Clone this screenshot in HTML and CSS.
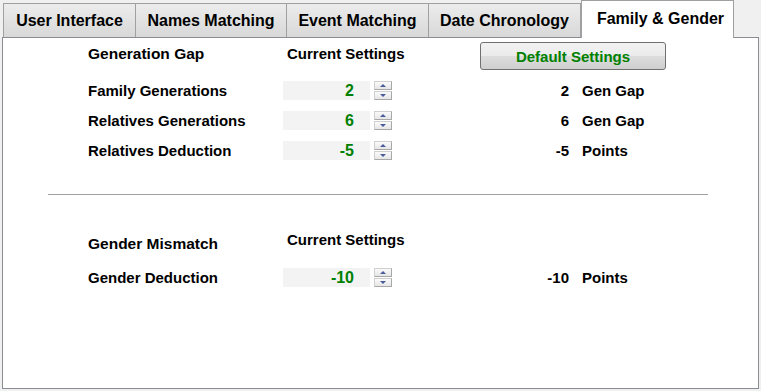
FILE: index.html
```html
<!DOCTYPE html>
<html lang="en">
<head>
    <meta charset="UTF-8">
    <title>Family &amp; Gender</title>
    <link rel="stylesheet" href="styles.css">
</head>
<body>
    <div class="tabs">
        <div class="tab">User Interface</div>
        <div class="tab">Names Matching</div>
        <div class="tab">Event Matching</div>
        <div class="tab">Date Chronology</div>
        <div class="tab active">Family &amp; Gender</div>
    </div>

    <div class="panel">
        <div class="section">
            <div class="head">
                <div class="title">Generation Gap</div>
                <div class="current">Current Settings</div>
                <button class="defaults">Default Settings</button>
            </div>
            <div class="row">
                <div class="label">Family Generations</div>
                <div class="input">2</div>
                <div class="spin"><span class="up"></span><span class="down"></span></div>
                <div class="num">2</div>
                <div class="unit">Gen Gap</div>
            </div>
            <div class="row">
                <div class="label">Relatives Generations</div>
                <div class="input">6</div>
                <div class="spin"><span class="up"></span><span class="down"></span></div>
                <div class="num">6</div>
                <div class="unit">Gen Gap</div>
            </div>
            <div class="row">
                <div class="label">Relatives Deduction</div>
                <div class="input">-5</div>
                <div class="spin"><span class="up"></span><span class="down"></span></div>
                <div class="num">-5</div>
                <div class="unit">Points</div>
            </div>
        </div>

        <hr class="sep">

        <div class="section second">
            <div class="head">
                <div class="title">Gender Mismatch</div>
                <div class="current">Current Settings</div>
            </div>
            <div class="row">
                <div class="label">Gender Deduction</div>
                <div class="input">-10</div>
                <div class="spin"><span class="up"></span><span class="down"></span></div>
                <div class="num">-10</div>
                <div class="unit">Points</div>
            </div>
        </div>
    </div>
</body>
</html>
```

FILE: styles.css
```css
body {
    margin: 0;
    width: 761px;
    height: 391px;
    background: #f0f0f0;
    font-family: "Liberation Sans", Arial, sans-serif;
    font-weight: bold;
    color: #000;
    overflow: hidden;
}
.tabs {
    display: flex;
    align-items: flex-end;
    height: 37px;
    padding-left: 3px;
    position: relative;
    z-index: 1;
}
.tab {
    height: 34px;
    line-height: 33px;
    font-size: 16px;
    text-align: center;
    white-space: nowrap;
    border: 1px solid #a0a0a0;
    border-bottom: none;
    border-right: none;
    background: linear-gradient(#ececec, #d8d8d8);
    box-sizing: border-box;
}
.tab:nth-child(1) { width: 132px; }
.tab:nth-child(2) { width: 151px; }
.tab:nth-child(3) { width: 142px; }
.tab:nth-child(4) { width: 153px; border-right: 1px solid #a0a0a0; }
.tab.active {
    width: 153px;
    height: 38px;
    line-height: 35px;
    margin-bottom: -1px;
    padding-left: 6px;
    background: #fff;
    border: 1px solid #a0a0a0;
    border-bottom: none;
}
.panel {
    margin-left: 2px;
    width: 757px;
    height: 352px;
    box-sizing: border-box;
    background: #fff;
    border: 1px solid #8a8c93;
}
.section {
    padding-left: 85px;
}
.head {
    display: flex;
    align-items: flex-start;
    height: 28px;
    padding-top: 4px;
    font-size: 15px;
    white-space: nowrap;
}
.title {
    width: 199px;
    padding-top: 3px;
    font-size: 15.5px;
}
.current {
    width: 193px;
    padding-top: 3px;
}
.defaults {
    width: 186px;
    height: 28px;
    font-family: inherit;
    font-weight: bold;
    font-size: 15px;
    color: #008000;
    background: linear-gradient(#f2f2f2 0%, #ebebeb 50%, #dddddd 51%, #cfcfcf 100%);
    border: 1px solid #707070;
    border-radius: 3px;
    padding: 0;
}
.row {
    display: flex;
    align-items: center;
    height: 30px;
    font-size: 15px;
    white-space: nowrap;
}
.section .head + .row {
    margin-top: 5px;
}
.label {
    width: 195px;
}
.input {
    width: 87px;
    height: 19px;
    line-height: 19px;
    background: #f3f3f3;
    color: #008000;
    text-align: right;
    padding-right: 16px;
    box-sizing: border-box;
    font-size: 16px;
}
.spin {
    margin-left: 4px;
    width: 18px;
    height: 19px;
    display: flex;
    flex-direction: column;
    gap: 1px;
}
.spin span {
    flex: 1;
    border: 1px solid #a8a8a8;
    border-top-color: #d0d0d0;
    border-left-color: #d0d0d0;
    background: linear-gradient(#fafafa, #e6e6e6);
    position: relative;
}
.spin span::after {
    content: "";
    position: absolute;
    left: 5px;
    top: 2px;
    border-left: 3px solid transparent;
    border-right: 3px solid transparent;
}
.spin .up::after { border-bottom: 3px solid #4a5a9a; }
.spin .down::after { border-top: 3px solid #4a5a9a; }
.num {
    width: 177px;
    text-align: right;
}
.unit {
    margin-left: 13px;
}
.sep {
    margin: 29px 0 0 45px;
    width: 660px;
    height: 0;
    border: none;
    border-top: 1px solid #a0a0a0;
}
.second .head {
    padding-top: 35px;
}
.second .title {
    padding-top: 5px;
}
.second .current {
    padding-top: 1px;
}
.second .head + .row {
    margin-top: 4px;
}
```
